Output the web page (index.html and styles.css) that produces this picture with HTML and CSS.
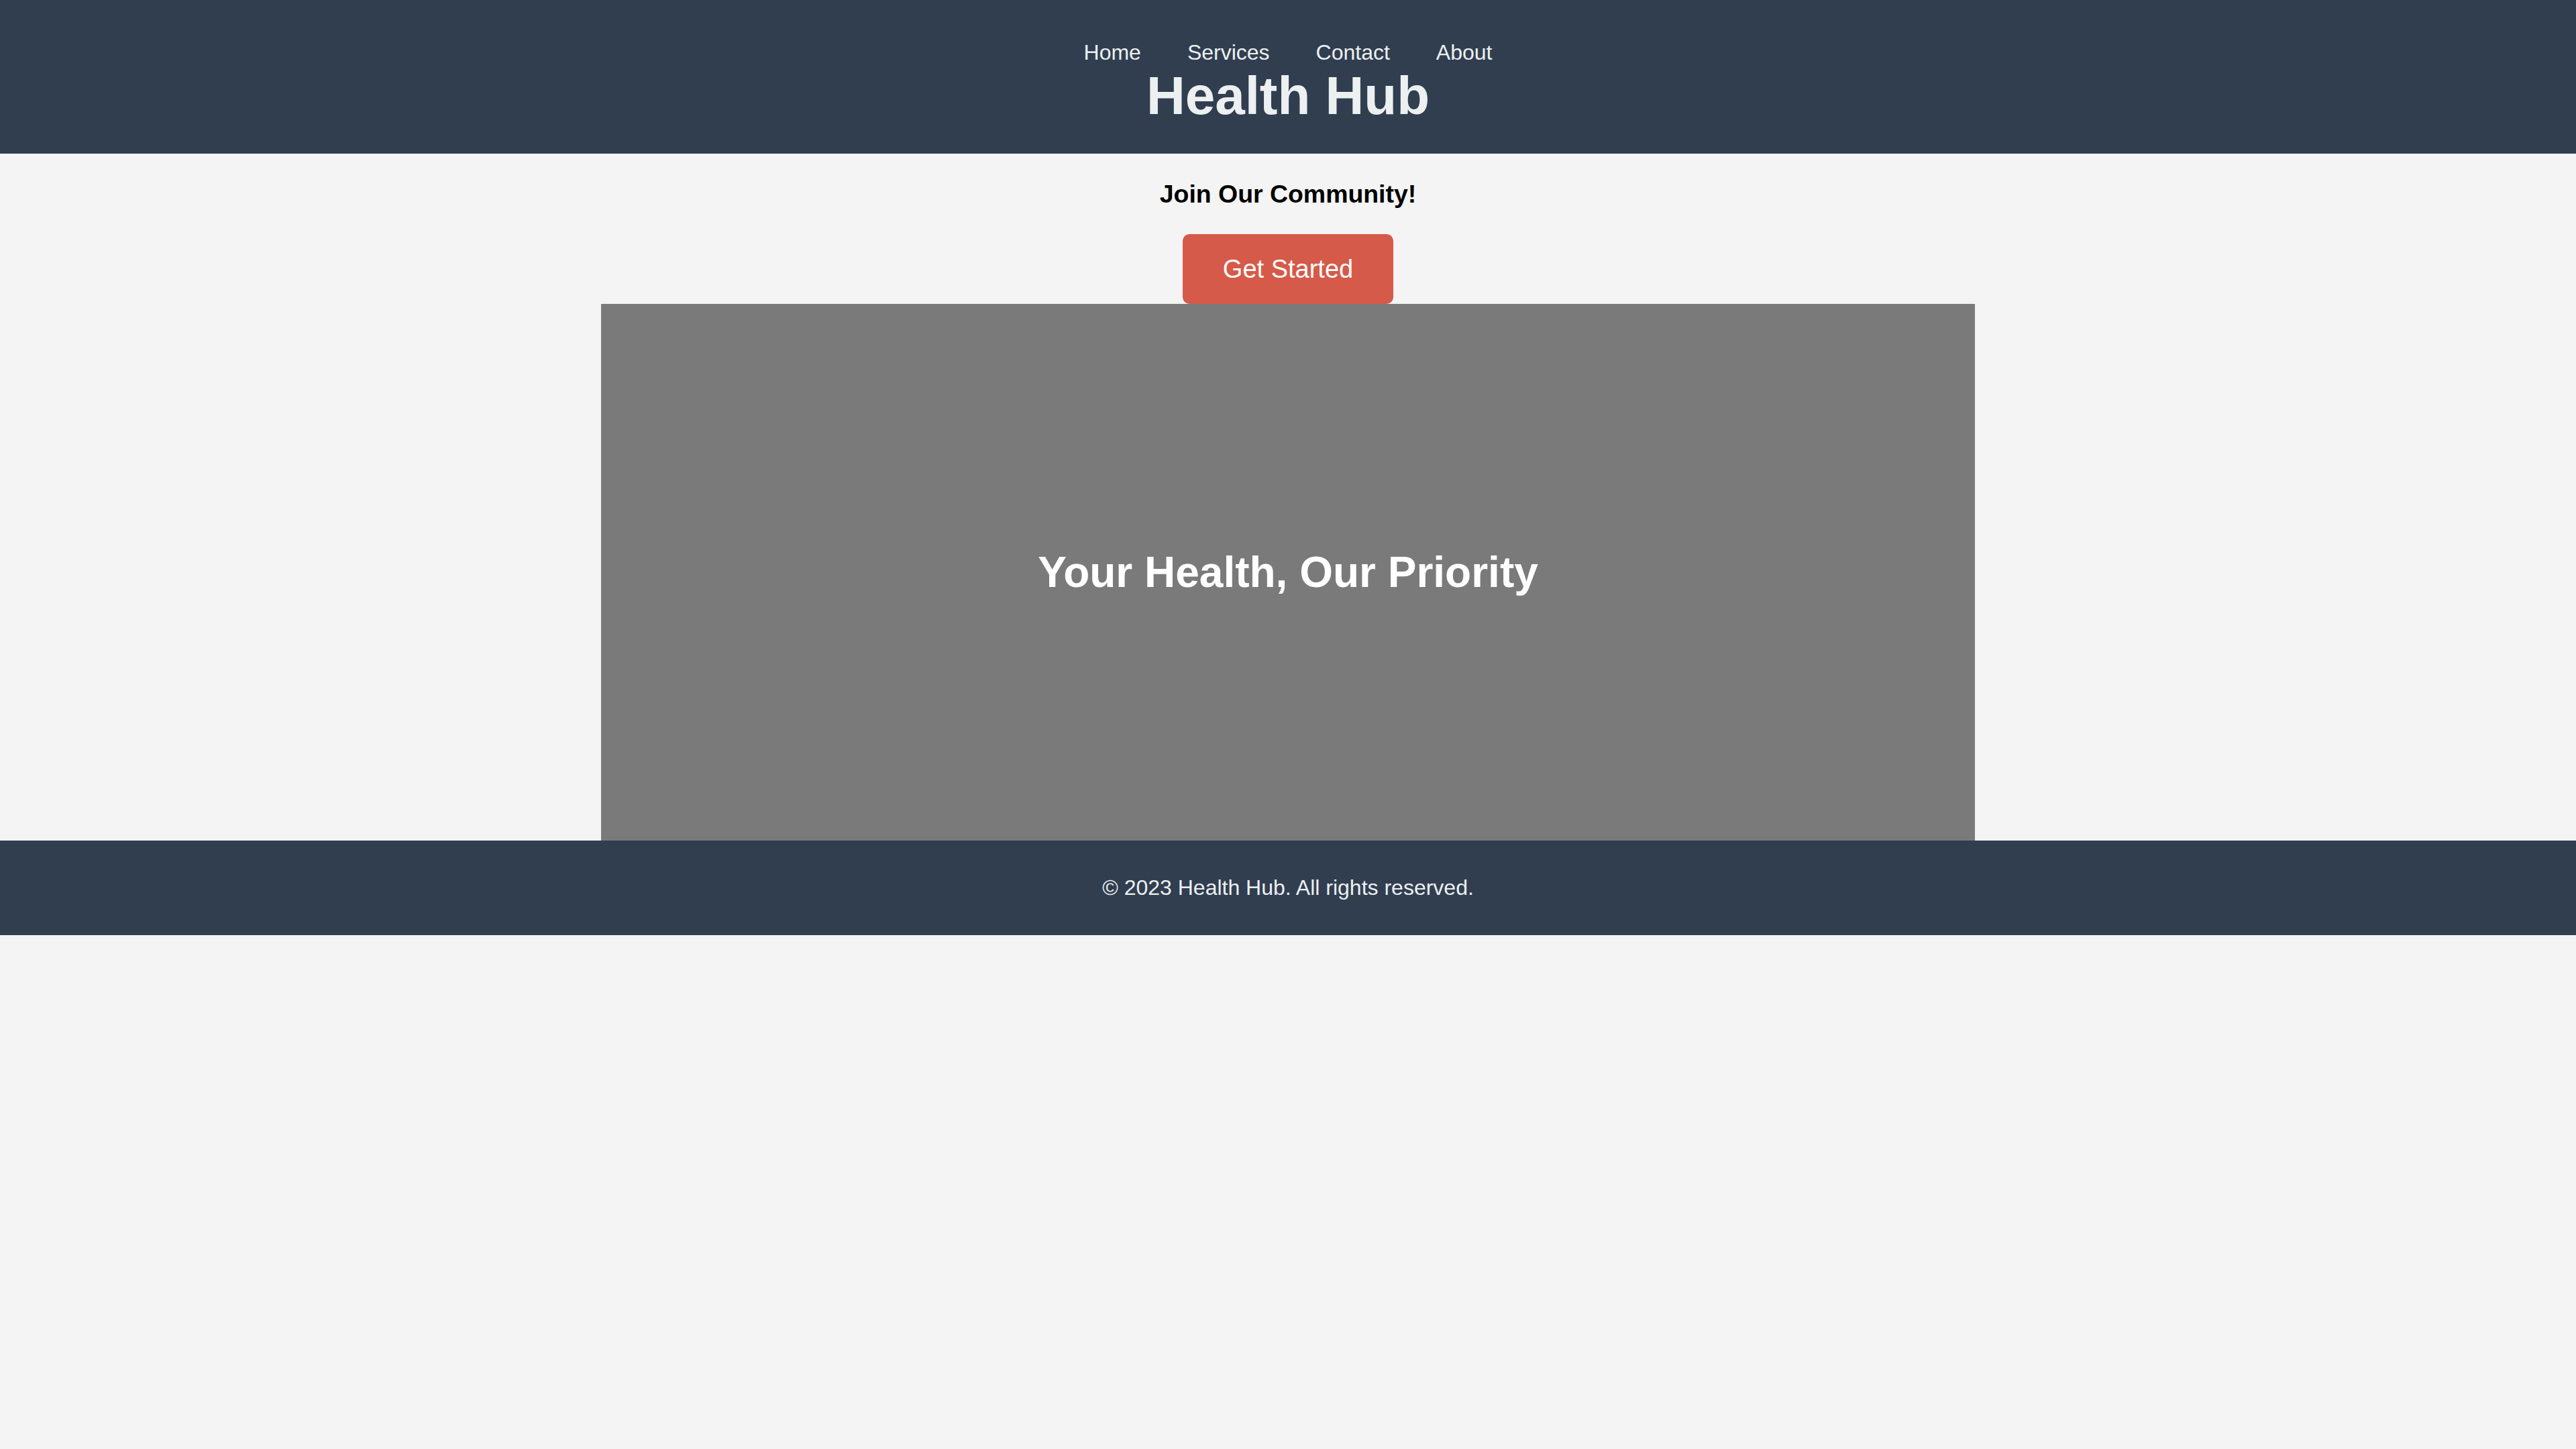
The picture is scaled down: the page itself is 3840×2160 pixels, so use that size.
FILE: index.html
```html
<!DOCTYPE html>
<html lang="en">
<head>
<meta charset="utf-8">
<title>Health Hub</title>
<link rel="stylesheet" href="styles.css">
</head>
<body>
<header class="site-header">
  <nav class="nav">
    <a class="nav-link" href="#">Home</a>
    <a class="nav-link" href="#">Services</a>
    <a class="nav-link" href="#">Contact</a>
    <a class="nav-link" href="#">About</a>
  </nav>
  <h1 class="brand">Health Hub</h1>
</header>
<main class="main">
  <section class="cta">
    <h3 class="cta-title">Join Our Community!</h3>
    <button class="btn">Get Started</button>
  </section>
  <section class="hero">
    <h2 class="hero-title">Your Health, Our Priority</h2>
  </section>
</main>
<footer class="site-footer">
  <p class="copy">© 2023 Health Hub. All rights reserved.</p>
</footer>
</body>
</html>
```
FILE: styles.css
```css
html, body {
  margin: 0;
  padding: 0;
}
body {
  background: #f4f4f4;
  font-family: "Liberation Sans", Arial, sans-serif;
  color: #000;
}
.site-header {
  background: #313e50;
  color: #ecf0f1;
  text-align: center;
  padding: 60px 0 40px;
}
.nav {
  display: flex;
  justify-content: center;
  gap: 69px;
  font-size: 32px;
  line-height: 37px;
}
.nav-link {
  color: #ecf0f1;
  text-decoration: none;
}
.brand {
  margin: 0;
  font-size: 80px;
  line-height: 92px;
  font-weight: bold;
}
.cta {
  display: flex;
  flex-direction: column;
  align-items: center;
  padding-top: 39px;
}
.cta-title {
  margin: 0 0 38px;
  font-size: 37.44px;
  line-height: 43px;
  font-weight: bold;
}
.btn {
  font-family: "Liberation Sans", Arial, sans-serif;
  font-size: 38px;
  line-height: 44px;
  padding: 30px 60px;
  border: none;
  border-radius: 10px;
  background: #d65a49;
  color: #fff;
}
.hero {
  width: 2048px;
  height: 800px;
  margin: 0 auto;
  background: #7a7a7a;
  display: flex;
  align-items: center;
  justify-content: center;
}
.hero-title {
  margin: 0;
  color: #fff;
  font-size: 64px;
  line-height: 74px;
  font-weight: bold;
}
.site-footer {
  background: #313e50;
  color: #ecf0f1;
  text-align: center;
  padding: 52px 0;
}
.copy {
  margin: 0;
  font-size: 32px;
  line-height: 37px;
}
```
